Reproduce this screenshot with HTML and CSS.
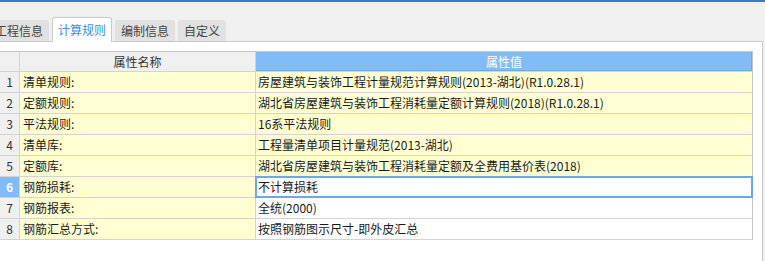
FILE: index.html
```html
<!DOCTYPE html>
<html lang="zh-CN">
<head>
<meta charset="utf-8">
<title>计算规则</title>
<link rel="stylesheet" href="styles.css">
</head>
<body>
<div class="topbar"></div>
<div class="tabs">
  <div class="tab first">工程信息</div>
  <div class="tab active">计算规则</div>
  <div class="tab">编制信息</div>
  <div class="tab">自定义</div>
</div>
<div class="panel">
  <div class="grid">
    <div class="cell num head"></div>
    <div class="cell name head">属性名称</div>
    <div class="cell value head">属性值</div>

    <div class="cell num">1</div>
    <div class="cell name">清单规则:</div>
    <div class="cell value">房屋建筑与装饰工程计量规范计算规则(2013-湖北)(R1.0.28.1)</div>

    <div class="cell num">2</div>
    <div class="cell name">定额规则:</div>
    <div class="cell value">湖北省房屋建筑与装饰工程消耗量定额计算规则(2018)(R1.0.28.1)</div>

    <div class="cell num">3</div>
    <div class="cell name">平法规则:</div>
    <div class="cell value">16系平法规则</div>

    <div class="cell num">4</div>
    <div class="cell name">清单库:</div>
    <div class="cell value">工程量清单项目计量规范(2013-湖北)</div>

    <div class="cell num">5</div>
    <div class="cell name">定额库:</div>
    <div class="cell value">湖北省房屋建筑与装饰工程消耗量定额及全费用基价表(2018)</div>

    <div class="cell num selnum">6</div>
    <div class="cell name">钢筋损耗:</div>
    <div class="cell value white selected">不计算损耗</div>

    <div class="cell num">7</div>
    <div class="cell name">钢筋报表:</div>
    <div class="cell value white">全统(2000)</div>

    <div class="cell num">8</div>
    <div class="cell name">钢筋汇总方式:</div>
    <div class="cell value white">按照钢筋图示尺寸-即外皮汇总</div>
  </div>
</div>
</body>
</html>
```

FILE: styles.css
```css
* { box-sizing: border-box; }
html, body {
  margin: 0;
  padding: 0;
  background: #f0f0f0;
  font-family: "Noto Sans CJK SC", "Microsoft YaHei", sans-serif;
  font-size: 12px;
  color: #1a1a1a;
  overflow: hidden;
}
.topbar {
  height: 2px;
  background: #2b7fdc;
}
.tabs {
  height: 39px;
  display: flex;
  align-items: flex-end;
  gap: 3px;
  margin-left: -11px;
  position: relative;
  z-index: 2;
}
.tab {
  height: 21px;
  line-height: 21px;
  padding: 0 6px;
  background: #e1e1e1;
  color: #444;
  border-radius: 3px 3px 0 0;
  white-space: nowrap;
}
.tab.active {
  height: 25px;
  line-height: 23px;
  margin-bottom: -1px;
  background: #fff;
  color: #3a8ee6;
  border: 1px solid #c9c9c9;
  border-bottom: none;
  padding: 0 5px;
}
.panel {
  width: 763px;
  height: 230px;
  background: #fff;
  border-top: 1px solid #c9c9c9;
  border-right: 1px solid #c9c9c9;
  padding-top: 9px;
}
.grid {
  width: 753px;
  display: grid;
  grid-template-columns: 19px 235px 496px;
  grid-template-rows: 19px repeat(8, 20px);
  gap: 1px;
  background: #d3d3d3;
  border-top: 1px solid #c9c9c9;
  border-bottom: 1px solid #d3d3d3;
  border-right: 1px solid #c4c4c4;
}
.cell {
  line-height: 20px;
  white-space: nowrap;
  overflow: visible;
}
.cell.head { line-height: 19px; }
.num {
  background: #f0f0f0;
  color: #333;
  text-align: center;
}
.name {
  background: #ffffd2;
  padding-left: 3px;
}
.name.head {
  background: #f0f0f0;
  text-align: center;
  color: #333;
  padding-left: 0;
}
.value {
  background: #ffffd2;
  padding-left: 2px;
}
.value.head {
  background: #80bcf8;
  color: #fff;
  text-align: center;
  padding-left: 0;
  box-shadow: inset -1px -1px 0 #6fa9e6;
}
.value.white { background: #fff; }
.selnum {
  background: #80bcf8;
  color: #fff;
  font-weight: bold;
}
.selected {
  outline: 2px solid #6aa8ec;
  outline-offset: -1px;
  position: relative;
}
```
